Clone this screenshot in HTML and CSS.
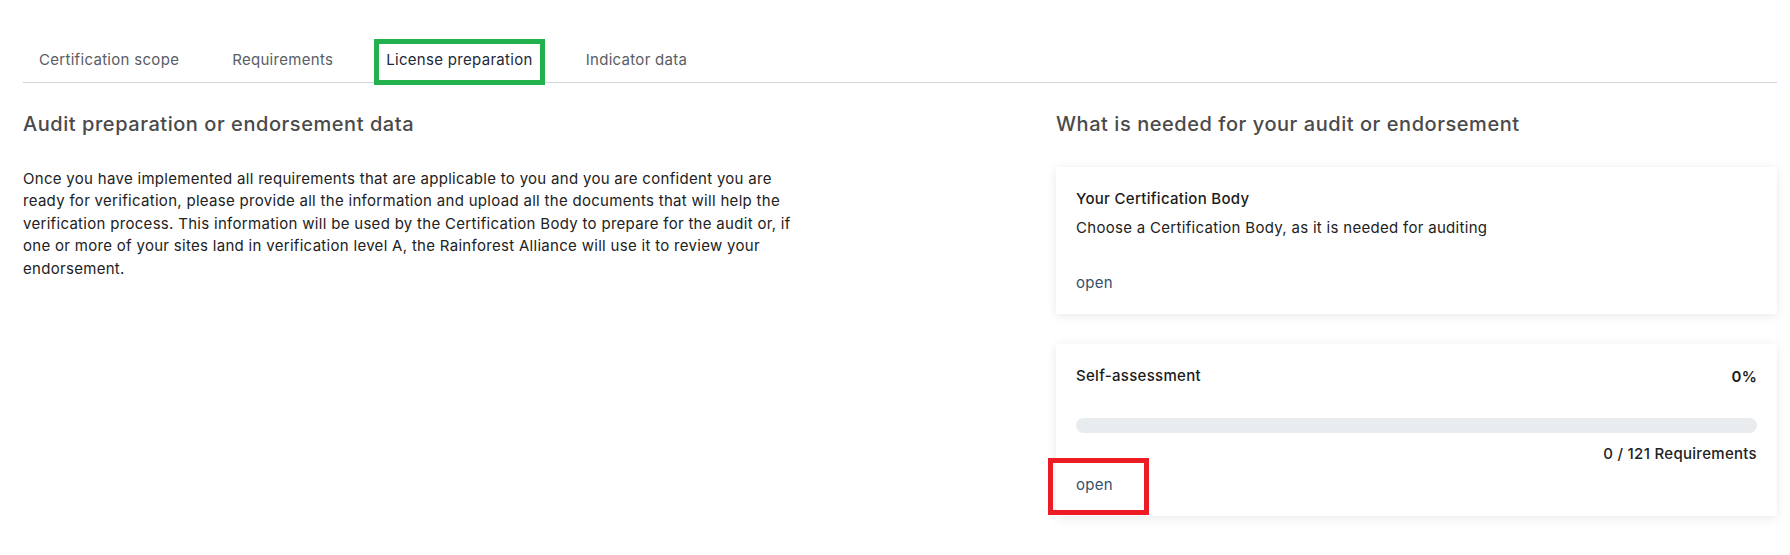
FILE: index.html
```html
<!DOCTYPE html>
<html lang="en">
<head>
  <meta charset="UTF-8">
  <meta name="viewport" content="width=device-width, initial-scale=1.0">
  <title>License preparation</title>
  <link rel="stylesheet" href="styles.css">
</head>
<body>
  <div class="page">
    <nav class="tabs">
      <a href="#" class="tab">Certification scope</a>
      <a href="#" class="tab">Requirements</a>
      <a href="#" class="tab active marked-green">License preparation</a>
      <a href="#" class="tab">Indicator data</a>
    </nav>

    <div class="content">
      <section class="intro">
        <h2>Audit preparation or endorsement data</h2>
        <p>Once you have implemented all requirements that are applicable to you and you are confident you are ready for verification, please provide all the information and upload all the documents that will help the verification process. This information will be used by the Certification Body to prepare for the audit or, if one or more of your sites land in verification level A, the Rainforest Alliance will use it to review your endorsement.</p>
      </section>

      <section class="needs">
        <h2>What is needed for your audit or endorsement</h2>

        <div class="card">
          <div class="card-title">Your Certification Body</div>
          <p class="card-text">Choose a Certification Body, as it is needed for auditing</p>
          <a href="#" class="open-link spaced">open</a>
        </div>

        <div class="card">
          <div class="card-row">
            <div class="card-title">Self-assessment</div>
            <div class="percent">0%</div>
          </div>
          <div class="progress"><div class="progress-fill" style="width: 0%"></div></div>
          <div class="count">0 / 121 Requirements</div>
          <a href="#" class="open-link marked-red">open</a>
        </div>
      </section>
    </div>
  </div>
</body>
</html>
```

FILE: styles.css
```css
body {
  font-family: Inter, "Open Sans", Arial, sans-serif;
  font-size: 15px;
  letter-spacing: 0.3px;
  background-color: #ffffff;
  color: #2a2a2a;
  margin: 0;
  padding: 0;
}
a {
  text-decoration: none;
}
.page {
  padding: 40px 13px 0 23px;
}
.tabs {
  display: flex;
  gap: 43px;
  padding-left: 11px;
  border-bottom: 1px solid #d3d4da;
}
.tab {
  display: block;
  padding: 10px 5px 10px;
  margin-bottom: -1px;
  line-height: 20px;
  color: #585d66;
  border-bottom: 3px solid transparent;
  position: relative;
}
.tab.active {
  color: #1e2838;
  border-bottom-color: #1f4a52;
}
.marked-green::after {
  content: '';
  position: absolute;
  left: -7px;
  right: -7px;
  top: -1px;
  bottom: -5px;
  border: 5px solid #22b14c;
}
.content {
  display: grid;
  grid-template-columns: 1fr 721px;
  gap: 24px;
  padding-top: 27px;
}
h2 {
  font-size: 20px;
  font-weight: 500;
  letter-spacing: 0.55px;
  line-height: 28px;
  color: #4a4a4a;
  margin: 0;
}
.intro p {
  max-width: 785px;
  margin: 30px 0 0;
  line-height: 22.4px;
  color: #222;
}
.needs h2 {
  margin-bottom: 29px;
}
.card {
  background-color: #ffffff;
  box-shadow: 0 2px 10px rgba(0, 0, 0, 0.09);
  padding: 21px 20px 20px;
  margin-bottom: 30px;
}
.card-row {
  display: flex;
  justify-content: space-between;
  align-items: center;
}
.card-title {
  font-weight: 500;
  line-height: 22px;
  color: #1b1b1b;
}
.card-text {
  line-height: 22px;
  margin: 7px 0 0;
  color: #222;
}
.percent {
  font-weight: 600;
  color: #1b1b1b;
}
.progress {
  height: 15px;
  margin-top: 31px;
  border-radius: 8px;
  background-color: #e9ecef;
  overflow: hidden;
}
.progress-fill {
  height: 100%;
  background-color: #1f4a52;
}
.count {
  margin-top: 10px;
  text-align: right;
  font-weight: 500;
  line-height: 22px;
  color: #222;
}
.open-link {
  display: inline-block;
  margin-top: 9px;
  line-height: 22px;
  color: #35506b;
  position: relative;
}
.open-link.spaced {
  margin-top: 33px;
}
.marked-red::after {
  content: '';
  position: absolute;
  left: -28px;
  right: -36px;
  top: -16px;
  bottom: -19px;
  border: 5px solid #ed1c24;
}
```
